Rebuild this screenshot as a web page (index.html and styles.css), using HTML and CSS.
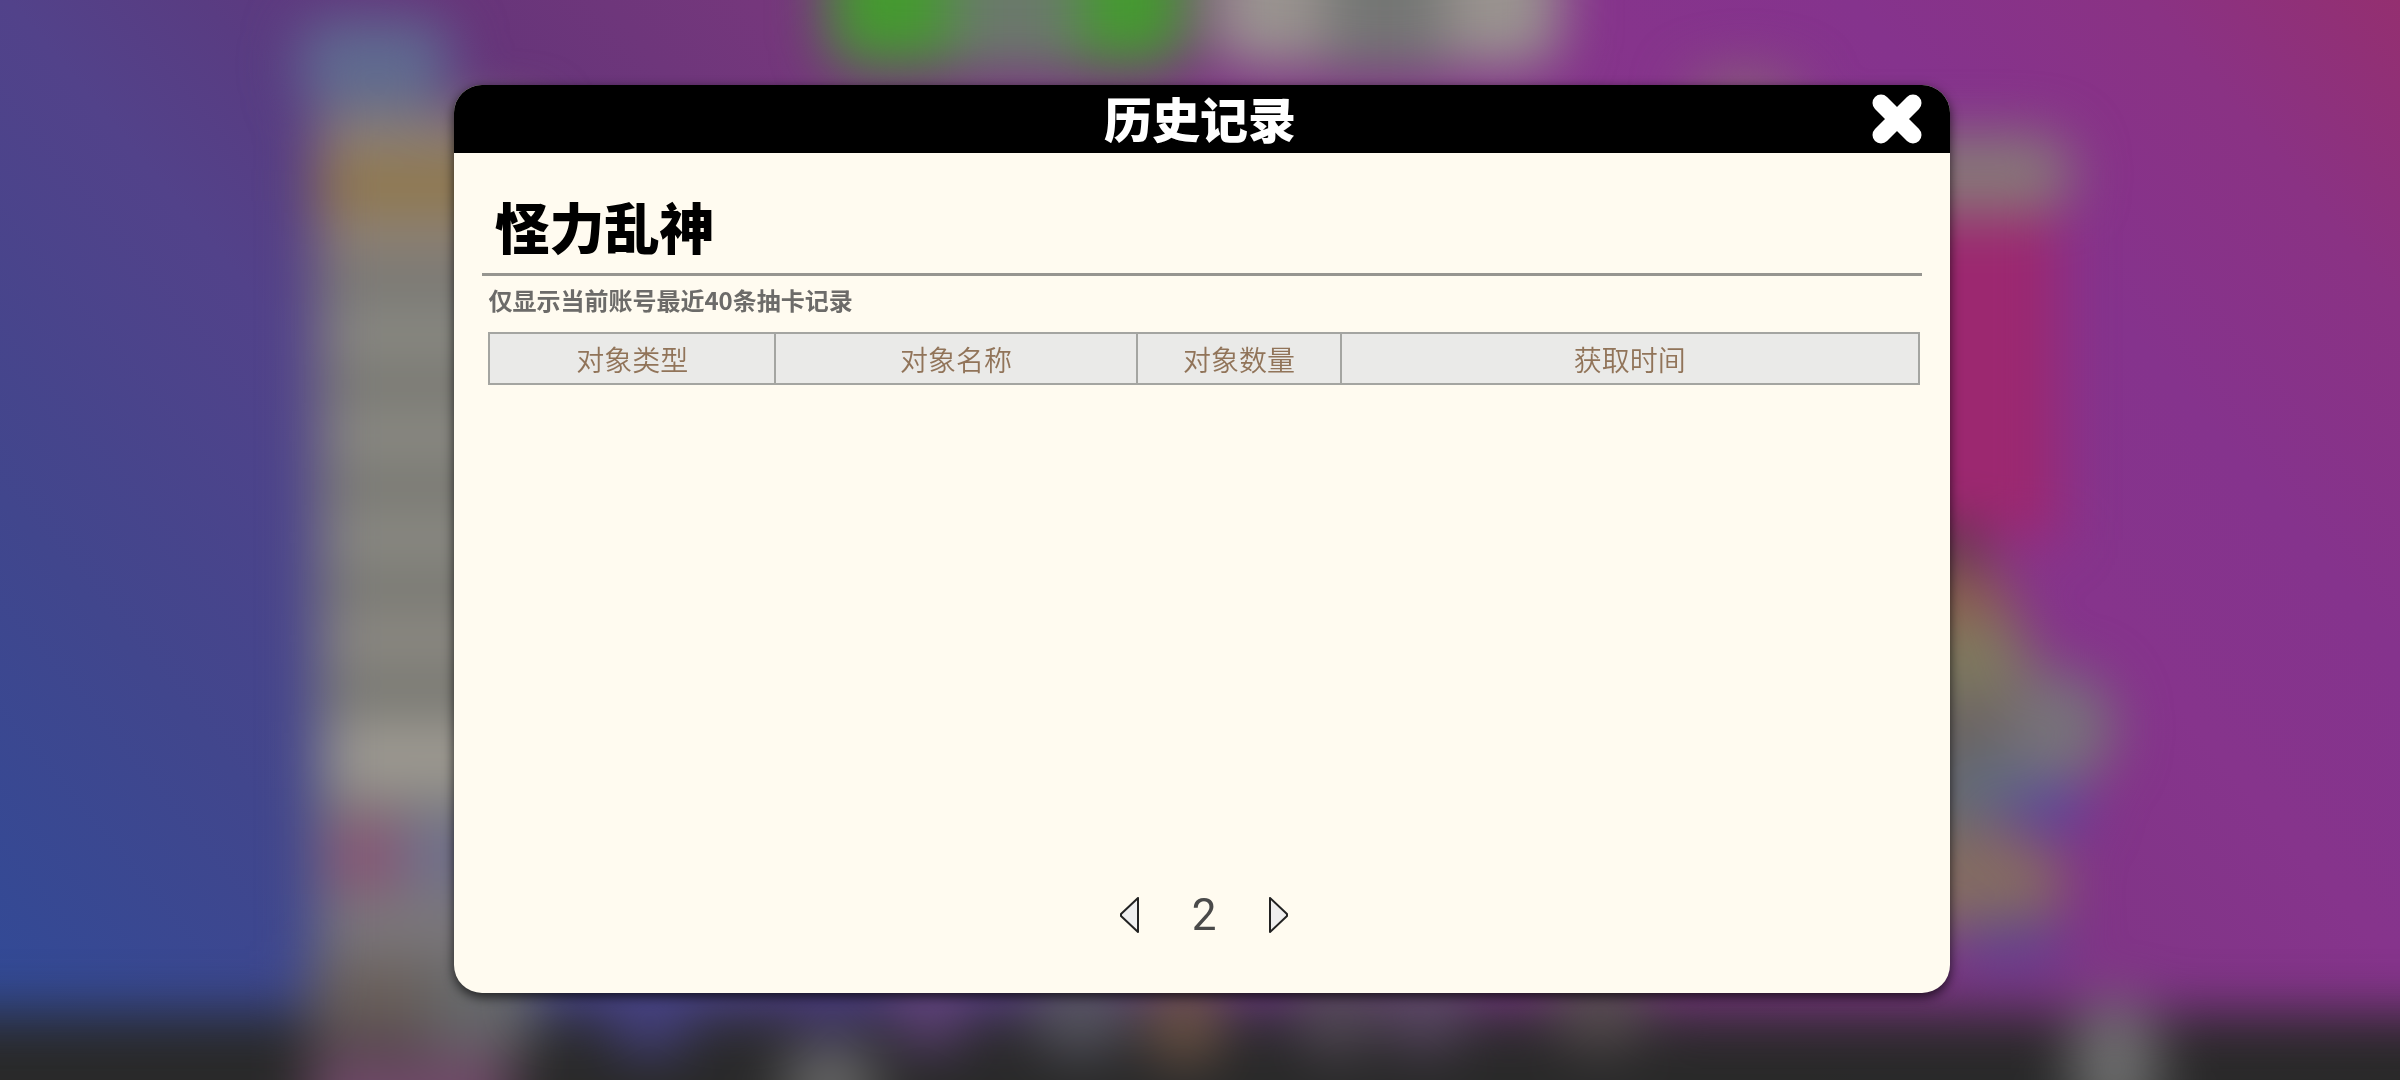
FILE: index.html
```
<!DOCTYPE html>
<html lang="zh-CN">
<head>
  <meta charset="UTF-8">
  <meta name="viewport" content="width=device-width, initial-scale=1.0">
  <title>历史记录</title>
  <link rel="stylesheet" href="styles.css">
</head>
<body>
  <!-- 模糊的游戏背景 -->
  <svg class="backdrop" viewBox="0 0 2400 1080" preserveAspectRatio="none" aria-hidden="true">
    <defs>
      <linearGradient id="sky" gradientUnits="userSpaceOnUse" x1="0" y1="1000" x2="1909" y2="-591">
        <stop offset="0" stop-color="#324a96"/>
        <stop offset="0.13" stop-color="#41468d"/>
        <stop offset="0.26" stop-color="#52428a"/>
        <stop offset="0.32" stop-color="#593c82"/>
        <stop offset="0.4" stop-color="#67357a"/>
        <stop offset="0.49" stop-color="#75377c"/>
        <stop offset="0.75" stop-color="#86348c"/>
        <stop offset="0.83" stop-color="#85338d"/>
        <stop offset="0.92" stop-color="#8a3284"/>
        <stop offset="1" stop-color="#942f70"/>
      </linearGradient>
      <filter id="soft" filterUnits="userSpaceOnUse" x="-100" y="-100" width="2600" height="1280" color-interpolation-filters="sRGB">
        <feGaussianBlur stdDeviation="27"/>
      </filter>
    </defs>
    <rect width="2400" height="1080" fill="url(#sky)"/>
    <g filter="url(#soft)">
      <!-- 底栏 -->
      <rect x="-100" y="1014" width="2600" height="200" fill="#292929"/>
      <ellipse cx="650" cy="1010" rx="45" ry="45" fill="#454180"/>
      <ellipse cx="830" cy="990" rx="55" ry="40" fill="#483a7c"/>
      <ellipse cx="930" cy="1005" rx="40" ry="45" fill="#60427a"/>
      <ellipse cx="1080" cy="1010" rx="50" ry="45" fill="#565560"/>
      <ellipse cx="1185" cy="1018" rx="40" ry="48" fill="#6a5244"/>
      <ellipse cx="1335" cy="1010" rx="40" ry="45" fill="#544a58"/>
      <ellipse cx="1425" cy="1005" rx="45" ry="45" fill="#5a4864"/>
      <ellipse cx="1600" cy="1005" rx="50" ry="45" fill="#564c50"/>
      <ellipse cx="830" cy="1085" rx="50" ry="40" fill="#686868"/>
      <ellipse cx="2115" cy="1065" rx="46" ry="66" fill="#6c6c6c"/>

      <!-- 左侧列表 -->
      <rect x="300" y="20" width="150" height="90" rx="30" fill="#5f6b90"/>
      <rect x="318" y="118" width="220" height="850" fill="#82827c"/>
      <rect x="318" y="112" width="220" height="145" fill="#8d8074"/>
      <rect x="316" y="164" width="220" height="42" fill="#907642"/>
      <rect x="330" y="265" width="200" height="40" fill="#767672"/>
      <rect x="330" y="306" width="200" height="50" fill="#8a8982"/>
      <rect x="330" y="372" width="200" height="26" fill="#72726c"/>
      <rect x="330" y="410" width="200" height="50" fill="#8a8982"/>
      <rect x="330" y="474" width="200" height="26" fill="#72726c"/>
      <rect x="330" y="512" width="200" height="50" fill="#8a8982"/>
      <rect x="330" y="576" width="200" height="26" fill="#72726c"/>
      <rect x="330" y="614" width="200" height="50" fill="#8c8982"/>
      <rect x="330" y="676" width="200" height="30" fill="#72726c"/>
      <rect x="330" y="722" width="200" height="66" fill="#9e9a92"/>
      <rect x="330" y="816" width="70" height="78" fill="#885674"/>
      <rect x="400" y="816" width="130" height="74" fill="#70708a"/>
      <rect x="318" y="894" width="220" height="62" fill="#7a767a"/>
      <rect x="310" y="960" width="120" height="80" fill="#685e5a"/>
      <rect x="430" y="960" width="104" height="90" fill="#66686a"/>
      <rect x="310" y="1052" width="200" height="90" fill="#704a68"/>

      <!-- 顶部按钮 -->
      <rect x="828" y="-80" width="360" height="146" rx="30" fill="#459a30"/>
      <rect x="950" y="-80" width="130" height="150" fill="#6a7a6a"/>
      <rect x="1212" y="-80" width="348" height="146" rx="30" fill="#99938f"/>
      <rect x="1325" y="-80" width="120" height="152" fill="#747674"/>
      <ellipse cx="1745" cy="95" rx="60" ry="24" fill="#886078"/>

      <!-- 右侧卡面 -->
      <rect x="1800" y="200" width="258" height="340" fill="#9c2870"/>
      <rect x="1800" y="134" width="272" height="80" rx="36" fill="#877878"/>
      <rect x="1800" y="530" width="185" height="400" fill="#6b6864"/>
      <ellipse cx="1950" cy="545" rx="35" ry="24" fill="#5e3048"/>
      <ellipse cx="1960" cy="605" rx="54" ry="35" fill="#8e5c4c"/>
      <ellipse cx="1975" cy="660" rx="58" ry="45" fill="#7f7a5e"/>
      <ellipse cx="1975" cy="735" rx="75" ry="42" fill="#6b6462"/>
      <ellipse cx="2060" cy="728" rx="54" ry="57" fill="#77727a"/>
      <ellipse cx="1990" cy="788" rx="50" ry="32" fill="#5f6c7e"/>
      <ellipse cx="2050" cy="808" rx="36" ry="26" fill="#57489c"/>
      <ellipse cx="1980" cy="884" rx="84" ry="54" fill="#846c62"/>
      <ellipse cx="2010" cy="945" rx="60" ry="24" fill="#5f4190"/>
    </g>
  </svg>

  <main class="dialog" role="dialog" aria-labelledby="dialog-title">
    <header class="dialog-header">
      <h1 class="dialog-title" id="dialog-title">历史记录</h1>
      <button class="close" type="button" aria-label="关闭">
        <svg viewBox="0 0 50 50" aria-hidden="true">
          <path d="M9 9L41 41M41 9L9 41"/>
        </svg>
      </button>
    </header>

    <section class="dialog-body">
      <h2 class="pool-name">怪力乱神</h2>
      <p class="hint">仅显示当前账号最近40条抽卡记录</p>

      <table class="records">
        <colgroup>
          <col class="col-type">
          <col class="col-name">
          <col class="col-count">
          <col class="col-time">
        </colgroup>
        <thead>
          <tr>
            <th scope="col">对象类型</th>
            <th scope="col">对象名称</th>
            <th scope="col">对象数量</th>
            <th scope="col">获取时间</th>
          </tr>
        </thead>
        <tbody></tbody>
      </table>

      <nav class="pager" aria-label="分页">
        <button class="page-btn" type="button" aria-label="上一页">
          <svg viewBox="0 0 20 36" aria-hidden="true"><path d="M18 1V35L1 19V17Z"/></svg>
        </button>
        <span class="page-num">2</span>
        <button class="page-btn" type="button" aria-label="下一页">
          <svg viewBox="0 0 20 36" aria-hidden="true"><path d="M2 1V35L19 19V17Z"/></svg>
        </button>
      </nav>
    </section>
  </main>
</body>
</html>
```
FILE: styles.css
```
* {
  box-sizing: border-box;
}

body {
  margin: 0;
  min-height: 100vh;
  padding: 0 0 2px 4px;
  display: flex;
  align-items: center;
  justify-content: center;
  background-color: #67357a;
  font-family: "Noto Sans CJK SC", sans-serif;
}

h1, h2, p {
  margin: 0;
}

button {
  padding: 0;
  border: none;
  background: none;
  cursor: pointer;
}

.backdrop {
  position: fixed;
  top: 0;
  left: 0;
  width: 100%;
  height: 100%;
  z-index: -1;
}

/* 弹窗 */
.dialog {
  width: 62.4%;
  min-height: 84vh;
  display: flex;
  flex-direction: column;
  border-radius: 28px;
  background-color: #fffbf0;
  box-shadow: 0 4px 12px rgba(0, 0, 0, 0.7);
}

.dialog-header {
  display: grid;
  grid-template-columns: 1fr auto 1fr;
  align-items: center;
  height: 68px;
  padding: 0 28px;
  border-radius: 28px 28px 0 0;
  background-color: #000;
}

.dialog-title {
  grid-column: 2;
  padding: 0 4px 4px 0;
  color: #fff;
  font-size: 48px;
  font-weight: 900;
  line-height: 64px;
}

.close {
  justify-self: end;
  width: 50px;
  height: 50px;
}

.close svg {
  display: block;
  width: 100%;
  height: 100%;
  fill: none;
  stroke: #fff;
  stroke-width: 17;
  stroke-linecap: round;
}

.dialog-body {
  flex: 1;
  display: flex;
  flex-direction: column;
  padding: 0 28px 50px;
}

.pool-name {
  padding: 32px 12px 8px;
  border-bottom: 3px solid #969590;
  color: #000;
  font-size: 55px;
  font-weight: 900;
  line-height: 80px;
}

.hint {
  padding: 8px 6px;
  color: #6c6b69;
  font-size: 24px;
  font-weight: 700;
  line-height: 32px;
}

/* 记录表 */
.records {
  margin: 8px 2px 0 6px;
  table-layout: fixed;
  border-collapse: collapse;
}

.col-type { width: 20%; }
.col-name { width: 25.3%; }
.col-count { width: 14.3%; }

.records th {
  height: 51px;
  padding: 0;
  border: 2px solid #a4a5a1;
  background-color: #eaeae8;
  color: #917459;
  font-size: 28px;
  font-weight: 350;
  line-height: 40px;
}

/* 翻页 */
.pager {
  display: flex;
  align-items: center;
  justify-content: center;
  gap: 52px;
  margin-top: auto;
  padding-left: 4px;
}

.page-btn {
  width: 20px;
  height: 36px;
}

.page-btn svg {
  display: block;
  width: 100%;
  height: 100%;
  fill: #efefef;
  stroke: #222;
  stroke-width: 2;
  stroke-linejoin: round;
}

.page-num {
  color: #4a4a4a;
  font-family: Roboto, sans-serif;
  font-size: 44px;
  font-weight: 400;
  line-height: 56px;
}
```
